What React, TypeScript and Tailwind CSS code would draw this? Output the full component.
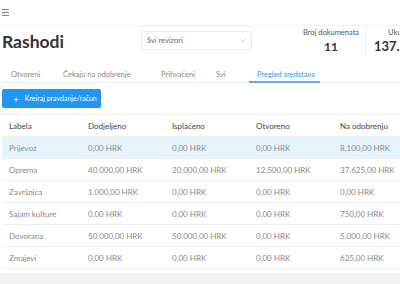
import React from "react";

const rows = [
  ["Prijevoz", "0,00 HRK", "0,00 HRK", "0,00 HRK", "8.100,00 HRK"],
  ["Oprema", "40.000,00 HRK", "20.000,00 HRK", "12.500,00 HRK", "37.625,00 HRK"],
  ["Završnica", "1.000,00 HRK", "0,00 HRK", "0,00 HRK", "0,00 HRK"],
  ["Sajam kulture", "0,00 HRK", "0,00 HRK", "0,00 HRK", "750,00 HRK"],
  ["Dovorana", "50.000,00 HRK", "50.000,00 HRK", "0,00 HRK", "5.000,00 HRK"],
  ["Zmajevi", "0,00 HRK", "0,00 HRK", "0,00 HRK", "625,00 HRK"],
];

const cols = "grid grid-cols-[79px_84px_84px_84px_84px]";

export default function App() {
  return (
    <div className="w-[400px] h-[284px] overflow-hidden bg-white relative" style={{ fontFamily: "Lato, 'Open Sans', sans-serif" }}>
      {/* top bar */}
      <div className="h-[26px] border-b border-[#f0f0f0] flex items-center pl-[2px]">
        <svg width="8" height="7" viewBox="0 0 8 7" className="text-[#888]">
          <path d="M0 0.5H7M0 3.5H7M0 6.5H7" stroke="currentColor" strokeWidth="1" />
          <path d="M0 2H5M0 5H5" stroke="currentColor" strokeWidth="0.6" opacity="0.5" />
        </svg>
      </div>
      {/* header */}
      <div className="flex items-start h-[32px] whitespace-nowrap">
        <div className="w-[141px] shrink-0 pl-[2px] pt-[7px] text-[17.5px] font-bold text-[#333] leading-none">Rashodi</div>
        <div className="shrink-0 mt-[5px] w-[111px] h-[19px] border border-[#ececec] rounded-[2px] flex items-center justify-between px-[5px]">
          <span className="text-[7.5px] text-[#666]">Svi revizori</span>
          <svg width="6" height="4" viewBox="0 0 6 4"><path d="M0.5 0.5L3 3L5.5 0.5" stroke="#bbb" strokeWidth="0.8" fill="none" /></svg>
        </div>
        <div className="shrink-0 ml-[48px] mt-[3px] w-[62px] flex flex-col items-center">
          <span className="text-[7.5px] text-[#555] leading-none">Broj dokumenata</span>
          <span className="text-[12px] font-bold text-[#333] leading-none mt-[4px]">11</span>
        </div>
        <div className="shrink-0 w-px h-[32px] bg-[#eee] mt-[-1px] ml-[3px]" />
        <div className="shrink-0 ml-[8px] mt-[3px] flex flex-col items-start">
          <span className="text-[7.5px] text-[#555] leading-none ml-[14px]">Ukupno</span>
          <span className="text-[13px] font-bold text-[#333] leading-none mt-[3px]">137.825,00</span>
        </div>
      </div>
      {/* tabs */}
      <div className="flex h-[25px] border-b border-[#eee] text-[7.5px] text-[#888] whitespace-nowrap">
        <div className="shrink-0 w-[63px] pl-[11px] pt-[11px]">Otvoreni</div>
        <div className="shrink-0 w-[98px] pt-[11px]">Čekaju na odobrenje</div>
        <div className="shrink-0 w-[55px] pt-[11px]">Prihvaćeni</div>
        <div className="shrink-0 w-[33px] pt-[11px]">Svi</div>
        <div className="shrink-0 w-[71px] pl-[8px] pt-[11px] text-[#2196f3] border-b-2 border-[#63aee0] mb-[-1px]">Pregled sredstava</div>
      </div>
      {/* button */}
      <div className="pl-[2px] pt-[6px]">
        <div className="w-[99px] h-[19px] bg-[#2196f3] rounded-[2px] flex items-center pl-[11px] text-white text-[7px] whitespace-nowrap">
          <span className="text-[10px] leading-none mr-[6px]">+</span>
          <span>Kreiraj pravdanje/račun</span>
        </div>
      </div>
      {/* table */}
      <div className="mt-[5px] h-[3px] bg-[#f7f7f8]" />
      <div className="ml-[2px] text-[8px] whitespace-nowrap">
        <div className={`${cols} h-[21px] items-center text-[#444] border-b border-[#eee]`}>
          {["Labela", "Dodjeljeno", "Isplaćeno", "Otvoreno", "Na odobrenju"].map((h) => (
            <div key={h} className="pl-[7px]">{h}</div>
          ))}
        </div>
        {rows.map((r, i) => (
          <div key={i} className={`${cols} h-[22px] items-center text-[#888] border-b border-[#eee] ${i === 0 ? "bg-[#e6f5fd]" : ""}`}>
            {r.map((c, j) => (
              <div key={j} className="pl-[7px]">{c}</div>
            ))}
          </div>
        ))}
      </div>
      <div className="absolute left-0 right-0 bottom-0 h-[11px] bg-[#f2f2f4]" />
    </div>
  );
}
